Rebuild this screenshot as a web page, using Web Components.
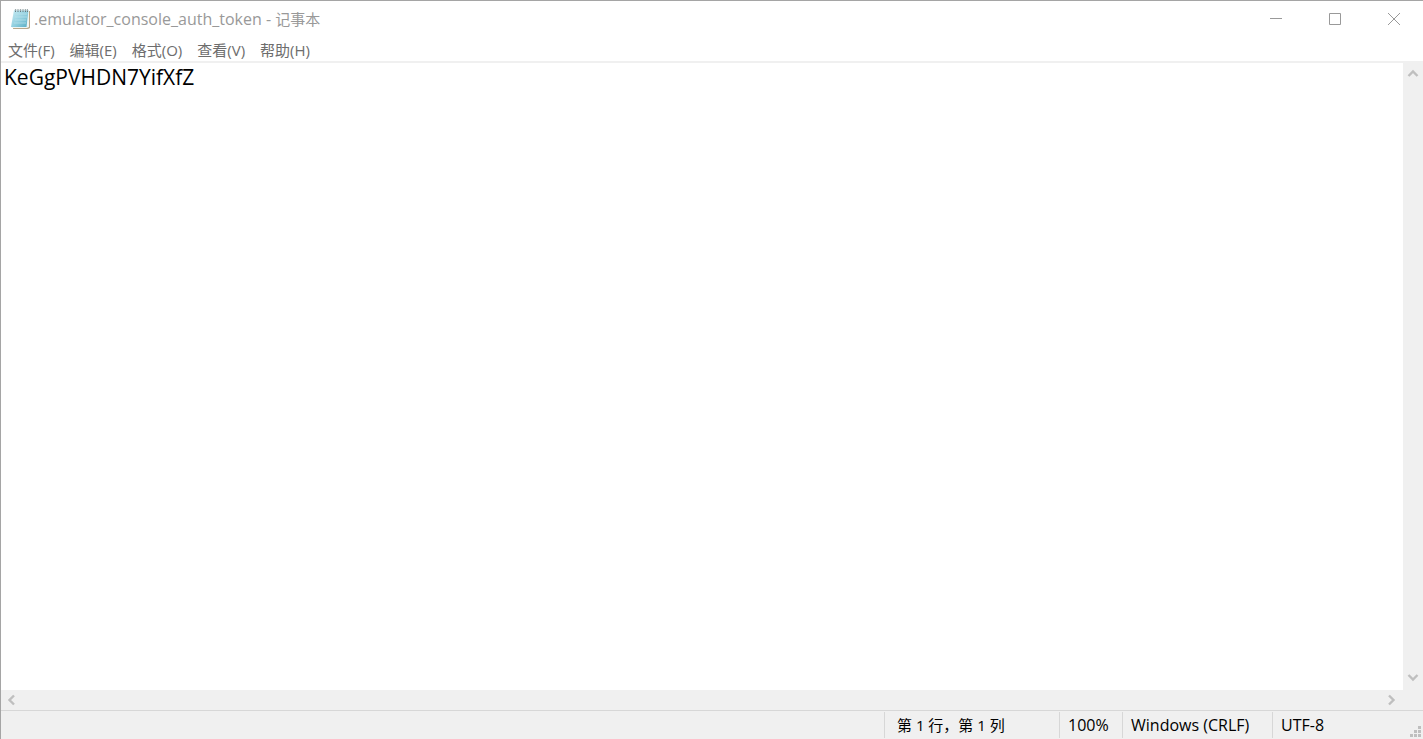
<!DOCTYPE html>
<html lang="zh-CN">
<head>
<meta charset="utf-8">
<title>.emulator_console_auth_token - 记事本</title>
<style>
html, body { height: 100%; margin: 0; }
body { font-family: "Open Sans", "Noto Sans CJK SC", sans-serif; font-size: 15px; overflow: hidden; }
</style>
</head>
<body>
<notepad-window>
  <title-bar slot="title">.emulator_console_auth_token - <span>记事本</span></title-bar>
  <menu-bar slot="menu">
    <menu-entry>文件(F)</menu-entry>
    <menu-entry>编辑(E)</menu-entry>
    <menu-entry>格式(O)</menu-entry>
    <menu-entry>查看(V)</menu-entry>
    <menu-entry>帮助(H)</menu-entry>
  </menu-bar>
  <text-editor text="KeGgPVHDN7YifXfZ"></text-editor>
  <status-bar slot="status">
    <status-cell class="position">第 1 行，第 1 列</status-cell>
    <status-cell class="zoom">100%</status-cell>
    <status-cell class="ending">Windows (CRLF)</status-cell>
    <status-cell class="encoding">UTF-8</status-cell>
  </status-bar>
</notepad-window>
<script>
function define(name, html, setup) {
  const template = document.createElement('template');
  template.innerHTML = html;
  customElements.define(name, class extends HTMLElement {
    constructor() {
      super();
      this.attachShadow({ mode: 'open' }).append(template.content.cloneNode(true));
    }
    connectedCallback() { if (setup) setup(this, this.shadowRoot); }
  });
}

define('notepad-window', `
<style>
:host { display: flex; flex-direction: column; box-sizing: border-box; height: 100%; background: #fff;
  border-top: 1px solid #a5a5a5; border-left: 1px solid #a5a5a5; }
main { flex: 1; min-height: 0; display: flex; }
</style>
<slot name="title"></slot>
<slot name="menu"></slot>
<main><slot></slot></main>
<slot name="status"></slot>`);

define('title-bar', `
<style>
:host { display: flex; align-items: flex-start; height: 37px; color: #999; font-size: 16px; }
.icon { width: 22px; height: 24px; margin: 6px 0 0 9px; flex: none; }
h1 { flex: 1; margin: 0 0 0 2px; font: inherit; line-height: 36px; white-space: nowrap; }
::slotted(span) { font-size: 15px; }
button { width: 59px; height: 36px; padding: 0; border: 0; background: none; color: #999; display: grid; place-items: center; }
svg { display: block; }
</style>
<svg class="icon" viewBox="0 0 22 24" aria-hidden="true">
  <defs><linearGradient id="page" x1="0" y1="0" x2="1" y2="1">
    <stop offset="0" stop-color="#c9ecf4"/><stop offset=".55" stop-color="#91cfdf"/><stop offset="1" stop-color="#58adc4"/>
  </linearGradient></defs>
  <path d="M5 4H20V21L18 22H3Z" fill="#b9a88b"/>
  <path d="M4 4H19V20L17 21H2Z" fill="#eef5f3"/>
  <path d="M4 3H18.500L16.500 20H1Z" fill="url(#page)"/>
  <path d="M6 7H17M5 10H17M5 13H16M4 16H16" stroke="#bce3ec" opacity=".7"/>
  <path d="M5.500 2V5M8 2V5M10.500 2V5M13 2V5M15.500 2V5M17.500 2V5" stroke="#687a80" stroke-width="1"/>
  <path d="M4.500 3H18" stroke="#d4dcdd" stroke-width="1"/>
</svg>
<h1><slot></slot></h1>
<button aria-label="最小化"><svg width="12" height="12" stroke="currentColor" fill="none"><path d="M0 5.500H12"/></svg></button>
<button aria-label="最大化"><svg width="12" height="12" stroke="currentColor" fill="none"><path d="M.5 .5H11.500V11.500H.5Z"/></svg></button>
<button aria-label="关闭"><svg width="12" height="12" stroke="currentColor" fill="none"><path d="M0 0L12 12M12 0L0 12"/></svg></button>`);

define('menu-bar', `
<style>
:host { display: flex; gap: 1px; height: 23px; border-bottom: 2px solid #f0f0f0; }
</style><slot></slot>`);

define('menu-entry', `
<style>
:host { display: block; }
button { display: block; height: 24px; padding: 0 7px; border: 0; background: none; font: inherit; line-height: 24px; color: #6d6d6d; white-space: nowrap; }
</style><button><slot></slot></button>`);

define('scroll-arrow', `
<style>
:host { display: block; width: 20px; height: 20px; flex: none; }
button { display: grid; place-items: center; width: 20px; height: 20px; padding: 0; border: 0; background: none; }
:host([dir-to="down"]) svg { rotate: 180deg; }
:host([dir-to="left"]) svg { rotate: 270deg; }
:host([dir-to="right"]) svg { rotate: 90deg; }
</style>
<button aria-label="滚动"><svg width="12" height="12" fill="none" stroke="#bfbfbf" stroke-width="2.400"><path d="M1.500 9L6 4.500L10.500 9"/></svg></button>`);

define('text-editor', `
<style>
:host { flex: 1; display: grid; grid-template-columns: 1fr 20px; grid-template-rows: 1fr 20px; background: #f0f0f0; }
textarea { box-sizing: border-box; width: 100%; height: 100%; margin: 0; padding: 0 3px; border: 0; outline: 0; resize: none; overflow: hidden;
  background: #fff; color: #000; font: 21px/28px "Open Sans", "Noto Sans CJK SC", sans-serif; white-space: pre; }
.bar { display: flex; justify-content: space-between; padding-right: 1px; }
.vertical { flex-direction: column; padding: 0 0 2px; }
</style>
<textarea aria-label="文本编辑器" spellcheck="false"></textarea>
<div class="bar vertical"><scroll-arrow dir-to="up"></scroll-arrow><scroll-arrow dir-to="down"></scroll-arrow></div>
<div class="bar"><scroll-arrow dir-to="left"></scroll-arrow><scroll-arrow dir-to="right"></scroll-arrow></div>`,
(host, root) => { root.querySelector('textarea').value = host.getAttribute('text'); });

define('status-bar', `
<style>
:host { position: relative; display: flex; justify-content: flex-end; height: 28px; border-top: 1px solid #d7d7d7; background: #f0f0f0; color: #000; }
::slotted(status-cell) { box-sizing: border-box; margin: 1px 0; border-left: 1px solid #d7d7d7; padding-left: 8px; font-size: 16px; }
::slotted(.position) { width: 175px; padding-left: 12px; font-size: 15px; }
::slotted(.zoom) { width: 63px; }
::slotted(.ending) { width: 150px; }
::slotted(.encoding) { width: 151px; }
.grip { position: absolute; right: 1px; bottom: 1px; }
</style>
<slot></slot>
<svg class="grip" width="12" height="12" fill="#bfbfbf" aria-hidden="true"><path d="M8 0h3v3h-3zM4 4h3v3h-3zM8 4h3v3h-3zM0 8h3v3h-3zM4 8h3v3h-3zM8 8h3v3h-3z"/></svg>`);

define('status-cell', `
<style>
:host { display: block; line-height: 26px; white-space: nowrap; }
</style><slot></slot>`);
</script>
</body>
</html>
